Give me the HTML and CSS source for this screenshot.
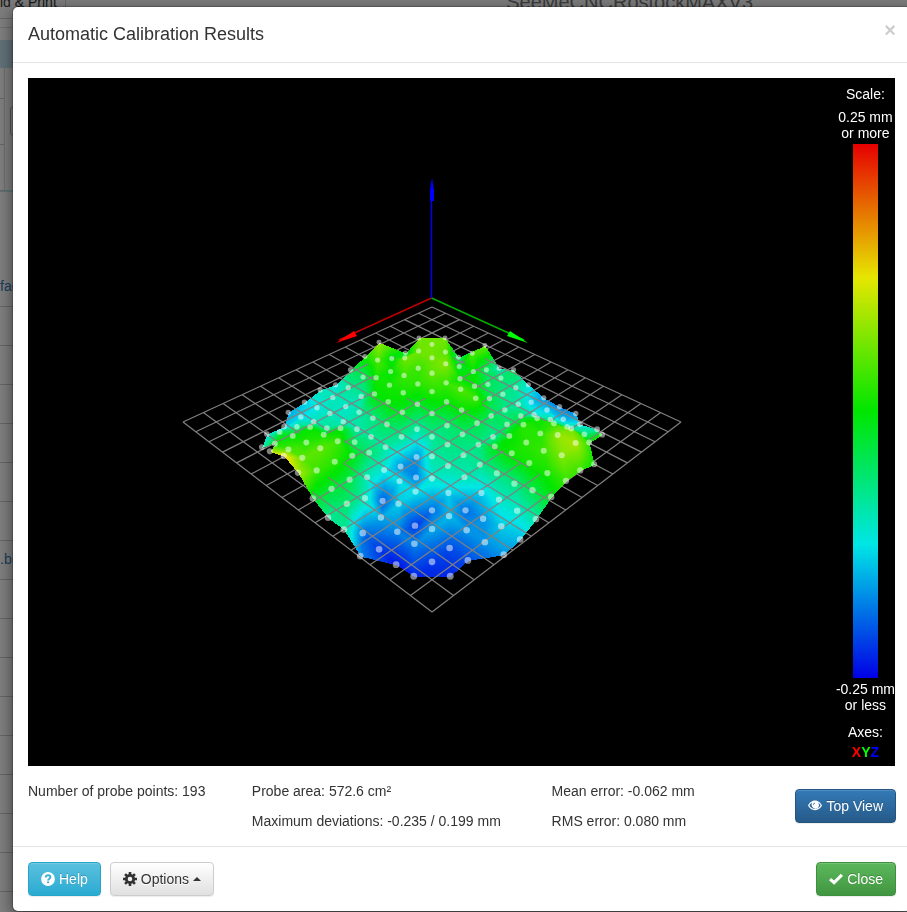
FILE: index.html
```html
<!DOCTYPE html>
<html lang="en">
<head>
  <meta charset="UTF-8" />
  <meta name="viewport" content="width=device-width, initial-scale=1.0" />
  <title>Automatic Calibration Results</title>
  <link rel="stylesheet" href="styles.css">
</head>

<body>
  <div class="page" aria-hidden="true">
    <div class="page-top">
      <span class="upload">ld &amp; Print</span>
      <span class="machine">SeeMeCNCRostockMAXV3</span>
    </div>
    <div class="panel">
      <div class="panel-head"></div>
      <div class="panel-row"></div>
      <div class="panel-row"><span class="field"></span></div>
      <div class="panel-row"></div>
    </div>
    <div class="files">
      <div class="file tall">fac</div>
      <div class="file"></div>
      <div class="file"></div>
      <div class="file"></div>
      <div class="file"></div>
      <div class="file"></div>
      <div class="file"></div>
      <div class="file">.bi</div>
      <div class="file"></div>
      <div class="file"></div>
      <div class="file"></div>
      <div class="file"></div>
      <div class="file"></div>
      <div class="file"></div>
      <div class="file"></div>
      <div class="file"></div>
    </div>
  </div>

  <div class="backdrop">
    <div class="modal" role="dialog" aria-labelledby="modalTitle">
      <div class="modal-header">
        <h4 id="modalTitle">Automatic Calibration Results</h4>
        <button class="close" aria-label="Dismiss">×</button>
      </div>

      <div class="modal-body">
        <div class="plot">
          <canvas id="mesh" width="867" height="688" role="img" aria-label="Bed height map"></canvas>
          <div class="legend">
            <p>Scale:</p>
            <p class="limit">0.25 mm<br>or more</p>
            <div class="bar"></div>
            <p class="limit">-0.25 mm<br>or less</p>
            <p class="axes-title">Axes:</p>
            <p class="axes"><span class="x">X</span><span class="y">Y</span><span class="z">Z</span></p>
          </div>
        </div>

        <div class="stats">
          <div>
            <p>Number of probe points: 193</p>
          </div>
          <div>
            <p>Probe area: 572.6 cm²</p>
            <p>Maximum deviations: -0.235 / 0.199 mm</p>
          </div>
          <div>
            <p>Mean error: -0.062 mm</p>
            <p>RMS error: 0.080 mm</p>
          </div>
          <button class="btn btn-primary">
            <svg class="icon" viewBox="0 0 14 14"><path fill="#fff" fill-rule="evenodd" d="M7 1.500C3.800 1.500 1.200 4 0 6.500c1.200 2.500 3.800 4.700 7 4.700s5.800-2.200 7-4.700C12.800 4 10.200 1.500 7 1.500zM1.400 6.500C2 5.300 3 4.200 4.200 3.600a4 4 0 0 0 5.600 5.400 4 4 0 0 0 0-5.400C11 4.200 12 5.300 12.600 6.500 11.400 8.500 9.300 10 7 10S2.600 8.500 1.400 6.500z"/><circle cx="7" cy="5.800" r="2.700" fill="#fff"/><path d="M5.300 5.800A1.800 1.800 0 0 1 7 4.100" fill="none" stroke="#2d6ca2" stroke-width=".9"/></svg>
            Top View
          </button>
        </div>
      </div>

      <div class="modal-footer">
        <button class="btn btn-info">
          <svg class="icon" viewBox="0 0 14 14"><circle cx="7" cy="7" r="6.900" fill="#fff"/><path d="M4.700 5.500C4.700 4 5.700 3.300 7 3.300s2.400.7 2.400 1.900C9.400 6.800 7.100 6.700 7.100 8.500" fill="none" stroke="#3fb0d3" stroke-width="1.900"/><path d="M6.100 9.400h2v1.800h-2z" fill="#3fb0d3"/></svg>
          Help
        </button>
        <button class="btn btn-default" aria-haspopup="true">
          <svg class="icon" viewBox="0 0 14 14"><g stroke="#333" stroke-width="2.600"><path d="M7 0v3M7 11v3M0 7h3M11 7h3M2.050 2.050l2.100 2.100M9.850 9.850l2.100 2.100M2.050 11.950l2.100-2.100M9.850 4.150l2.100-2.100"/></g><circle cx="7" cy="7" r="3.700" fill="none" stroke="#333" stroke-width="2.800"/></svg>
          Options
          <span class="caret"></span>
        </button>
        <button class="btn btn-success">
          <svg class="icon" viewBox="0 0 14 14"><path d="M0 8.200l2.200-2.300 2.900 2.600L11.800 1.800 14 3.900 5.200 12.800z" fill="#fff"/></svg>
          Close
        </button>
      </div>
    </div>
  </div>

  <script src="mesh.js"></script>
</body>
</html>
```

FILE: styles.css
```css
* {
  box-sizing: border-box;
}

body {
  margin: 0;
  font-family: "Liberation Sans", Arial, sans-serif;
  font-size: 14px;
  line-height: 20px;
  color: #333;
  background-color: #fff;
  overflow: hidden;
}

p, h4 {
  margin: 0;
}

/* Page behind the dialog */
.page {
  height: 100vh;
  overflow: hidden;
}

.page-top {
  display: flex;
  height: 19px;
  background-color: #f8f8f8;
  border-bottom: 1px solid #ccc;
}

.upload {
  flex: 0 0 65px;
  padding-right: 8px;
  border-right: 1px solid #ccc;
  line-height: 4px;
  text-align: right;
  white-space: nowrap;
}

.machine {
  margin-left: auto;
  margin-right: 154px;
  font-size: 20px;
  line-height: 4px;
  color: #777;
}

.panel {
  margin-top: 8px;
  padding-top: 12px;
  border-top: 1px solid #ddd;
  border-bottom: 2px solid #bce8f1;
}

.panel-head {
  height: 28px;
  background-color: #c4e3f3;
}

.panel-row {
  width: 5px;
  height: 46px;
  padding-top: 8px;
  border-right: 1px solid #ddd;
  box-shadow: 0 1px 0 #ccc;
}

.panel-row:nth-child(2) {
  height: 30px;
}

.field {
  display: block;
  width: 40px;
  height: 30px;
  margin-left: 10px;
  border: 1px solid #aaa;
  border-radius: 4px;
}

.file {
  height: 39px;
  padding-top: 8px;
  color: #337ab7;
  border-bottom: 1px solid #ccc;
}

.file.tall {
  height: 115px;
  padding-top: 84px;
}

/* Dialog */
.backdrop {
  position: fixed;
  inset: 0;
  padding: 6px 0 0 12px;
  background-color: rgba(0, 0, 0, 0.5);
}

.modal {
  margin-right: -5px;
  background-color: #fff;
  background-clip: padding-box;
  border: 1px solid rgba(0, 0, 0, 0.2);
  border-radius: 6px;
  box-shadow: 0 5px 15px rgba(0, 0, 0, 0.5);
}

.modal-header {
  display: flex;
  justify-content: space-between;
  align-items: flex-start;
  padding: 15px;
  border-bottom: 1px solid #e5e5e5;
}

.modal-header h4 {
  font-size: 18px;
  font-weight: 500;
  line-height: 25px;
}

.close {
  padding: 0;
  border: 0;
  background: none;
  font-family: inherit;
  font-size: 20px;
  font-weight: bold;
  line-height: 16px;
  color: #000;
  opacity: 0.2;
  cursor: pointer;
}

.modal-body {
  padding: 15px 15px 10px;
}

.plot {
  position: relative;
  margin-right: 1px;
  color: #fff;
  background-color: #000;
}

.plot canvas {
  display: block;
  width: 100%;
  height: auto;
}

.legend {
  position: absolute;
  top: 0;
  right: 0;
  bottom: 0;
  display: flex;
  flex-direction: column;
  align-items: center;
  padding: 6px 0 4px;
  text-align: center;
}

.limit {
  line-height: 16px;
  white-space: nowrap;
}

.legend p:first-child {
  margin-bottom: 5px;
}

.bar {
  flex: 1;
  width: 25px;
  margin: 3px 0;
  background: linear-gradient(#e60000, #e6e600 25%, #00e600 50%, #00e6e6 75%, #0000e6);
}

.axes-title {
  margin-top: 9px;
}

.axes {
  font-weight: bold;
}

.axes .x { color: #f00; }
.axes .y { color: #0f0; }
.axes .z { color: #00f; }

.stats {
  display: grid;
  grid-template-columns: 224fr 300fr 244fr auto;
  align-items: center;
  padding-top: 10px;
}

.stats div {
  align-self: start;
}

.stats p {
  padding: 5px 0;
  white-space: nowrap;
}

.modal-footer {
  display: flex;
  gap: 9px;
  padding: 15px;
  border-top: 1px solid #e5e5e5;
}

.modal-footer .btn-success {
  margin-left: auto;
}

.btn {
  display: inline-flex;
  align-items: center;
  gap: 4px;
  height: 34px;
  padding: 6px 12px;
  border: 1px solid;
  border-radius: 4px;
  font-family: inherit;
  font-size: 14px;
  line-height: 20px;
  color: #fff;
  text-shadow: 0 -1px 0 rgba(0, 0, 0, 0.2);
  box-shadow: inset 0 1px 0 rgba(255, 255, 255, 0.15), 0 1px 1px rgba(0, 0, 0, 0.075);
  white-space: nowrap;
  cursor: pointer;
}

.btn-primary {
  background: linear-gradient(#337ab7, #265a88);
  border-color: #245580;
}

.btn-info {
  background: linear-gradient(#5bc0de, #2aabd2);
  border-color: #28a4c9;
}

.btn-success {
  background: linear-gradient(#5cb85c, #419641);
  border-color: #3e8f3e;
}

.btn-default {
  color: #333;
  background: linear-gradient(#fff, #e0e0e0);
  border-color: #ccc;
  text-shadow: 0 1px 0 #fff;
}

.icon {
  width: 14px;
  height: 14px;
}

.caret {
  border-bottom: 4px solid #333;
  border-left: 4px solid transparent;
  border-right: 4px solid transparent;
}
```

FILE: mesh.js
```js
// Probed heights in 1/100 mm. Each key is a diagonal (column) of the probe
// lattice, values run from the back of the bed to the front.
const heights = {
  "-11": [-13, -9],
  "-10": [-16, -14, -4, 1, 10],
  "-9": [-14, -13, -7, 0, 4, 14],
  "-8": [-10, -12, -10, 0, 2, 5, 9],
  "-7": [-12, -10, -10, -8, 1, 5, 3, -2],
  "-6": [-5, -8, -11, -10, -1, 3, 2, -3, -8],
  "-5": [1, -5, -9, -9, -9, -5, -1, -4, -6, -8],
  "-4": [8, 4, 1, 0, -7, -8, -6, -10, -10, -19, -18],
  "-3": [-1, 0, 1, 0, -5, -9, -12, -20, -16, -22],
  "-2": [-2, 6, 3, 1, -2, -8, -17, -13, -14, -18, -24],
  "-1": [6, 6, 3, 2, -2, -9, -17, -18, -13, -22, -18, -23],
  "0": [6, 6, 5, 2, -3, -8, -9, -11, -19, -16, -22],
  "1": [6, 5, 7, 3, 0, -6, -7, -9, -14, -15, -21, -23],
  "2": [-6, -2, 0, 4, 0, -6, -8, -10, -19, -17, -21],
  "3": [4, 0, 0, 3, -4, -7, -8, -14, -17, -17],
  "4": [5, -5, -5, -4, -5, -8, -1, -7, -11, -14, -17],
  "5": [-10, -6, -7, -7, -5, 0, 1, -7, -11, -15],
  "6": [-5, -8, -9, -5, 2, 2, 1, -4, -9],
  "7": [-12, -14, -11, 0, 2, 3, 1, -1],
  "8": [-17, -14, -8, 3, 8, 7, 3],
  "9": [-18, -15, -7, 6, 9, 3],
  "10": [-17, -12, -6, 2, 0],
  "11": [-9, 1]
};

const canvas = document.getElementById("mesh");
const ctx = canvas.getContext("2d");
const W = canvas.width;
const H = canvas.height;

// d = sideways, s = towards the viewer, both 0 in the middle of the bed
function project(d, s, z) {
  const w = 0.8026 - 0.01208 * s;
  return {
    x: 404 + 12.23 * d / w,
    y: (338.7 + 1.94 * s) / w - 78 - 98 * z / w,
    w: w,
    z: z
  };
}

function color(z) {
  const t = Math.max(0, Math.min(4, (0.25 - z) * 8));
  const k = Math.floor(Math.min(t, 3));
  const stops = [[230, 0, 0], [230, 230, 0], [0, 230, 0], [0, 230, 230], [0, 0, 230]];
  return stops[k].map((c, n) => c + (stops[k + 1][n] - c) * (t - k));
}

const points = {};
Object.keys(heights).forEach(key => {
  const d = Number(key);
  const column = heights[key];
  column.forEach((h, n) => {
    const s = 2 * n - (column.length - 1);
    const p = project(d, s, h / 100);
    p.y += 5;
    points[(s - d) / 2 + "," + (s + d) / 2] = p;
  });
});

function triangle(full, above, a, b, c) {
  const area = (b.x - a.x) * (c.y - a.y) - (c.x - a.x) * (b.y - a.y);
  if (!area) return;
  const x0 = Math.floor(Math.min(a.x, b.x, c.x));
  const x1 = Math.ceil(Math.max(a.x, b.x, c.x));
  const y0 = Math.floor(Math.min(a.y, b.y, c.y));
  const y1 = Math.ceil(Math.max(a.y, b.y, c.y));
  for (let y = y0; y <= y1; y++) {
    for (let x = x0; x <= x1; x++) {
      const u = ((x - a.x) * (c.y - a.y) - (c.x - a.x) * (y - a.y)) / area;
      const v = ((b.x - a.x) * (y - a.y) - (x - a.x) * (b.y - a.y)) / area;
      if (u < 0 || v < 0 || u + v > 1) continue;
      const z = a.z + u * (b.z - a.z) + v * (c.z - a.z);
      const rgb = color(z);
      const o = (y * W + x) * 4;
      for (let n = 0; n < 3; n++) {
        full.data[o + n] = above.data[o + n] = rgb[n];
      }
      full.data[o + 3] = 255;
      above.data[o + 3] = z > 0 ? 255 : 0;
    }
  }
}

function toLayer(image) {
  const layer = document.createElement("canvas");
  layer.width = W;
  layer.height = H;
  layer.getContext("2d").putImageData(image, 0, 0);
  return layer;
}

function drawGrid() {
  const half = 1 / 0.0612;
  ctx.strokeStyle = "#808080";
  ctx.lineWidth = 1.2;
  ctx.beginPath();
  for (let n = 0; n <= 15; n++) {
    const t = (n / 15 - 0.5) * half;
    const e = half / 2;
    [[t, -e, t, e], [-e, t, e, t]].forEach(([i0, j0, i1, j1]) => {
      const p = project(j0 - i0, i0 + j0, 0);
      const q = project(j1 - i1, i1 + j1, 0);
      ctx.moveTo(p.x, p.y);
      ctx.lineTo(q.x, q.y);
    });
  }
  ctx.stroke();
}

function drawAxis(line, head, stroke, fill) {
  ctx.strokeStyle = stroke;
  ctx.fillStyle = fill;
  ctx.lineWidth = 1.4;
  ctx.beginPath();
  ctx.moveTo(403.5, 220);
  ctx.lineTo(line[0], line[1]);
  ctx.stroke();
  ctx.beginPath();
  head.forEach(p => ctx.lineTo(p[0], p[1]));
  ctx.fill();
}

function drawMesh() {
  const full = ctx.createImageData(W, H);
  const above = ctx.createImageData(W, H);
  // back to front, so that near cells cover far ones
  for (let s = -16; s <= 16; s++) {
    for (let i = -8; i <= 8; i++) {
      const j = s - i;
      const cell = [[i, j], [i + 1, j], [i + 1, j + 1], [i, j + 1]]
        .map(k => points[k.join(",")])
        .filter(Boolean);
      if (cell.length < 3) continue;
      if (cell.length === 4) {
        triangle(full, above, cell[0], cell[1], cell[2]);
        triangle(full, above, cell[0], cell[2], cell[3]);
      } else {
        triangle(full, above, cell[0], cell[1], cell[2]);
      }
    }
  }

  ctx.fillStyle = "#000";
  ctx.fillRect(0, 0, W, H);
  ctx.drawImage(toLayer(full), 0, 0);
  drawGrid();
  ctx.drawImage(toLayer(above), 0, 0);

  ctx.fillStyle = "rgba(255, 255, 255, 0.5)";
  Object.values(points).forEach(p => {
    ctx.beginPath();
    ctx.arc(p.x, p.y, 2.3 / p.w, 0, Math.PI * 2);
    ctx.fill();
  });

  drawAxis([311, 262], [[308, 265], [326, 253], [329, 258]], "#c00000", "#f00");
  drawAxis([496, 262], [[500, 265], [479, 258], [482, 253]], "#00b000", "#0f0");
  drawAxis([403.5, 105], [[404, 100], [406, 112], [406, 123], [402, 123], [402, 112]], "#00f", "#00f");
}

drawMesh();
```
